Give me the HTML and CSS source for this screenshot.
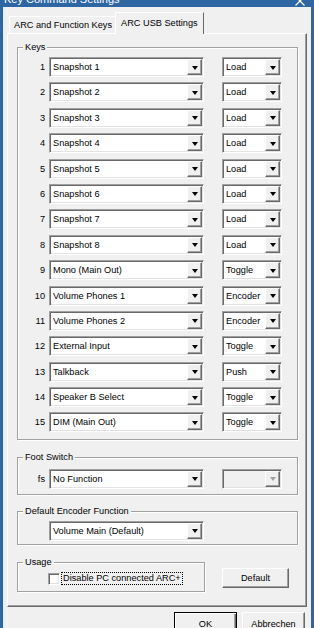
FILE: index.html
```html
<!DOCTYPE html>
<html lang="de">
  <head>
    <meta charset="UTF-8" />
    <title>Key Command Settings</title>
    <link rel="stylesheet" href="styles.css">
  </head>
  <body>
    <div class="window">
      <!-- Titelleiste -->
      <div class="titlebar">
        <span class="title">Key Command Settings</span>
        <svg class="close" width="10" height="10" viewBox="0 0 10 10">
          <path d="M0.5 0.5 L9.5 9.5 M9.5 0.5 L0.5 9.5" stroke="#fff" stroke-width="1.2" fill="none" />
        </svg>
      </div>

      <div class="client">
        <!-- Reiter -->
        <div class="tabs">
          <div class="tab">ARC and Function Keys</div>
          <div class="tab active">ARC USB Settings</div>
        </div>

        <div class="page">
          <!-- Keys -->
          <fieldset class="group keys">
            <legend>Keys</legend>
            <div class="rows">
              <div class="row"><span class="num">1</span><div class="combo wide"><span class="value">Snapshot 1</span><span class="drop"></span></div><div class="combo narrow"><span class="value">Load</span><span class="drop"></span></div></div>
              <div class="row"><span class="num">2</span><div class="combo wide"><span class="value">Snapshot 2</span><span class="drop"></span></div><div class="combo narrow"><span class="value">Load</span><span class="drop"></span></div></div>
              <div class="row"><span class="num">3</span><div class="combo wide"><span class="value">Snapshot 3</span><span class="drop"></span></div><div class="combo narrow"><span class="value">Load</span><span class="drop"></span></div></div>
              <div class="row"><span class="num">4</span><div class="combo wide"><span class="value">Snapshot 4</span><span class="drop"></span></div><div class="combo narrow"><span class="value">Load</span><span class="drop"></span></div></div>
              <div class="row"><span class="num">5</span><div class="combo wide"><span class="value">Snapshot 5</span><span class="drop"></span></div><div class="combo narrow"><span class="value">Load</span><span class="drop"></span></div></div>
              <div class="row"><span class="num">6</span><div class="combo wide"><span class="value">Snapshot 6</span><span class="drop"></span></div><div class="combo narrow"><span class="value">Load</span><span class="drop"></span></div></div>
              <div class="row"><span class="num">7</span><div class="combo wide"><span class="value">Snapshot 7</span><span class="drop"></span></div><div class="combo narrow"><span class="value">Load</span><span class="drop"></span></div></div>
              <div class="row"><span class="num">8</span><div class="combo wide"><span class="value">Snapshot 8</span><span class="drop"></span></div><div class="combo narrow"><span class="value">Load</span><span class="drop"></span></div></div>
              <div class="row"><span class="num">9</span><div class="combo wide"><span class="value">Mono (Main Out)</span><span class="drop"></span></div><div class="combo narrow"><span class="value">Toggle</span><span class="drop"></span></div></div>
              <div class="row"><span class="num">10</span><div class="combo wide"><span class="value">Volume Phones 1</span><span class="drop"></span></div><div class="combo narrow"><span class="value">Encoder</span><span class="drop"></span></div></div>
              <div class="row"><span class="num">11</span><div class="combo wide"><span class="value">Volume Phones 2</span><span class="drop"></span></div><div class="combo narrow"><span class="value">Encoder</span><span class="drop"></span></div></div>
              <div class="row"><span class="num">12</span><div class="combo wide"><span class="value">External Input</span><span class="drop"></span></div><div class="combo narrow"><span class="value">Toggle</span><span class="drop"></span></div></div>
              <div class="row"><span class="num">13</span><div class="combo wide"><span class="value">Talkback</span><span class="drop"></span></div><div class="combo narrow"><span class="value">Push</span><span class="drop"></span></div></div>
              <div class="row"><span class="num">14</span><div class="combo wide"><span class="value">Speaker B Select</span><span class="drop"></span></div><div class="combo narrow"><span class="value">Toggle</span><span class="drop"></span></div></div>
              <div class="row"><span class="num">15</span><div class="combo wide"><span class="value">DIM (Main Out)</span><span class="drop"></span></div><div class="combo narrow"><span class="value">Toggle</span><span class="drop"></span></div></div>
            </div>
          </fieldset>

          <!-- Foot Switch -->
          <fieldset class="group foot">
            <legend>Foot Switch</legend>
            <div class="row"><span class="num">fs</span><div class="combo wide"><span class="value">No Function</span><span class="drop"></span></div><div class="combo narrow disabled"><span class="value"></span><span class="drop"></span></div></div>
          </fieldset>

          <!-- Default Encoder Function -->
          <fieldset class="group encoder">
            <legend>Default Encoder Function</legend>
            <div class="row"><span class="num"></span><div class="combo wide"><span class="value">Volume Main (Default)</span><span class="drop"></span></div></div>
          </fieldset>

          <!-- Usage -->
          <div class="usage-line">
            <fieldset class="group usage">
              <legend>Usage</legend>
              <label class="check-row">
                <span class="checkbox"></span>
                <span class="check-label">Disable PC connected ARC+</span>
              </label>
            </fieldset>
            <button class="btn btn-default">Default</button>
          </div>
        </div>

        <!-- Dialog-Buttons -->
        <div class="buttons">
          <button class="btn primary">OK</button>
          <button class="btn">Abbrechen</button>
        </div>
      </div>
    </div>
  </body>
</html>
```

FILE: styles.css
```css
:root {
  --face: #f0f0f0;
  --shadow: #a0a0a0;
  --dark: #696969;
  --light: #e3e3e3;
  --title: #2e66a4;
}

* {
  margin: 0;
  padding: 0;
  box-sizing: border-box;
}

body {
  width: 314px;
  height: 628px;
  overflow: hidden;
  font-family: "Liberation Sans", Arial, sans-serif;
  font-size: 9.2px;
  color: #000;
  background: var(--face);
}

.window {
  width: 314px;
  height: 628px;
  background: var(--title);
  padding: 0 3px;
  display: flex;
  flex-direction: column;
}

/* Titelleiste */
.titlebar {
  flex: none;
  height: 7px;
  display: flex;
  justify-content: space-between;
  overflow: hidden;
  color: #fff;
}

.title {
  font-size: 11px;
  line-height: 12px;
  margin-top: -7px;
  padding-left: 1px;
}

.close {
  margin-top: -4px;
  margin-right: 6px;
}

.client {
  flex: 1;
  background: var(--face);
  padding: 5px 4px 0;
  overflow: hidden;
}

/* Reiter */
.tabs {
  position: relative;
  z-index: 1;
  height: 22px;
  display: flex;
  align-items: flex-end;
  padding-left: 2px;
  margin-bottom: -1px;
}

.tab {
  height: 18px;
  line-height: 17px;
  padding: 0 4px;
  border: 1px solid;
  border-bottom: 0;
  border-color: #fff var(--dark) #fff #fff;
  white-space: nowrap;
}

.tab.active {
  height: 22px;
  line-height: 21px;
  padding: 0 5px;
  margin: 0 -2px;
  background: var(--face);
}

.page {
  height: 574px;
  border: 1px solid;
  border-color: #fff var(--dark) var(--dark) #fff;
  box-shadow: inset -1px -1px 0 var(--shadow);
  padding: 8px 8px 0 9px;
}

/* Gruppen */
.group {
  border: 1px solid var(--shadow);
  box-shadow: inset 1px 1px 0 #fff, 1px 1px 0 #fff;
  min-width: 0;
}

.group legend {
  margin-left: 5px;
  padding: 0 2px;
  line-height: 11px;
  background: var(--face);
}

.keys .rows {
  display: flex;
  flex-direction: column;
  gap: 5.4px;
  padding: 4px 0 6.4px;
}

.foot {
  margin-top: 12px;
  padding: 6px 0 5px;
}

.encoder {
  margin-top: 11px;
  padding: 4px 0 3px;
}

.row {
  display: flex;
  align-items: center;
  height: 20px;
}

.num {
  width: 27px;
  margin-right: 4px;
  text-align: right;
}

/* Kombinationsfelder */
.combo {
  height: 20px;
  display: flex;
  padding: 1px;
  background: #fff;
  border: 1px solid;
  border-color: var(--shadow) #fff #fff var(--shadow);
  box-shadow: inset 1px 1px 0 var(--dark), inset -1px -1px 0 var(--light);
}

.combo.wide {
  width: 155px;
}

.combo.narrow {
  width: 60px;
  margin-left: 18px;
}

.combo .value {
  flex: 1;
  padding-left: 2px;
  line-height: 16px;
  white-space: nowrap;
  overflow: hidden;
}

.drop {
  width: 15px;
  height: 16px;
  display: flex;
  align-items: center;
  justify-content: center;
  background: var(--face);
  border: 1px solid;
  border-color: #fff var(--dark) var(--dark) #fff;
  box-shadow: inset -1px -1px 0 var(--shadow);
}

.drop::after {
  content: "";
  border-left: 3px solid transparent;
  border-right: 3px solid transparent;
  border-top: 4px solid #000;
  margin-top: 1px;
}

.combo.disabled {
  background: var(--face);
}

.combo.disabled .drop::after {
  border-top-color: var(--shadow);
}

/* Usage */
.usage-line {
  display: flex;
  align-items: flex-start;
  margin-top: 12px;
}

.usage {
  width: 188px;
  padding: 5px 0 6px;
}

.check-row {
  display: flex;
  align-items: center;
  height: 12px;
  margin-left: 30px;
}

.checkbox {
  width: 12px;
  height: 12px;
  background: #fff;
  border: 1px solid;
  border-color: var(--shadow) #fff #fff var(--shadow);
  box-shadow: inset 1px 1px 0 var(--dark), inset -1px -1px 0 var(--light);
}

.check-label {
  margin-left: 2px;
  padding: 0 1px;
  line-height: 11px;
  outline: 1px dotted #000;
  outline-offset: 0;
  white-space: nowrap;
}

/* Schaltflaechen */
.btn {
  font-family: inherit;
  font-size: 9.2px;
  color: #000;
  background: var(--face);
  border: 1px solid;
  border-color: #fff var(--dark) var(--dark) #fff;
  box-shadow: inset -1px -1px 0 var(--shadow);
}

.btn-default {
  width: 67px;
  height: 20px;
  margin: 11px 0 0 17px;
}

.buttons {
  display: flex;
  justify-content: flex-end;
  gap: 5px;
  margin-top: 5px;
  padding-right: 2px;
}

.buttons .btn {
  width: 63px;
  height: 23px;
}

.btn.primary {
  border-color: #000;
  box-shadow: inset 1px 1px 0 #fff, inset -1px -1px 0 var(--dark), inset -2px -2px 0 var(--shadow);
}
```
